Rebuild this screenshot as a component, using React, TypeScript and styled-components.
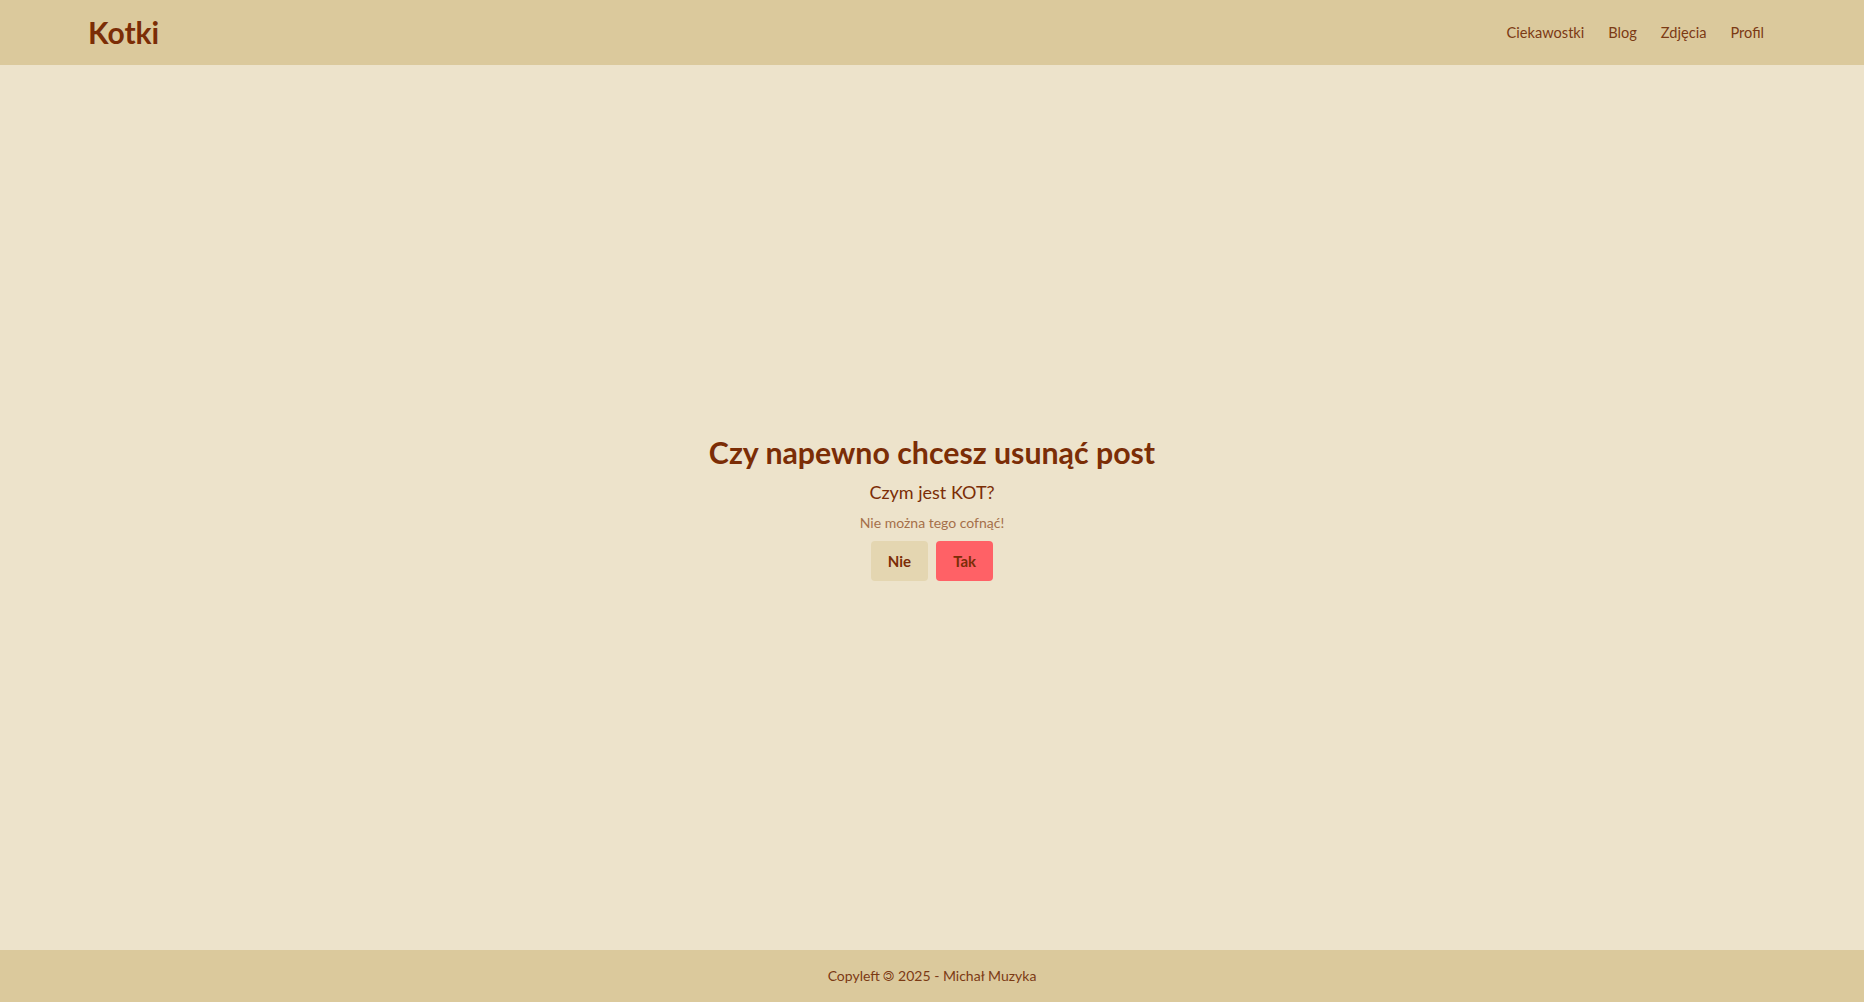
import React from "react";
import styled, { createGlobalStyle } from "styled-components";

const Global = createGlobalStyle`
  html, body { margin: 0; padding: 0; height: 100%; }
  body { background: #ede3cb; color: #7b2d06; font-family: "Lato", "Noto Sans", sans-serif; }
  #root { min-height: 100vh; display: flex; flex-direction: column; }
`;

const Header = styled.header`
  height: 65px;
  background: #dbc99c;
  display: flex;
  align-items: center;
  justify-content: space-between;
  padding: 0 88px;
  box-sizing: border-box;
`;

const Logo = styled.a`
  font-family: "Lato", sans-serif;
  font-weight: 700;
  font-size: 30px;
  color: #7b2d06;
  text-decoration: none;
  margin-top: -1px;
`;

const Nav = styled.nav`
  display: flex;
`;

const NavLink = styled.a`
  font-family: "Lato", sans-serif;
  font-size: 14.6px;
  color: #7b3a14;
  padding: 0 12px;
  text-decoration: none;
  margin-top: -1px;
`;

const Main = styled.main`
  flex: 1;
  display: flex;
  flex-direction: column;
  align-items: center;
  justify-content: center;
`;

const Title = styled.h1`
  font-family: "Lato", sans-serif;
  font-weight: 700;
  font-size: 30.3px;
  line-height: 36px;
  margin: 0;
  color: #7b2d06;
`;

const Subtitle = styled.h2`
  font-family: "Lato", sans-serif;
  font-weight: 400;
  font-size: 18px;
  line-height: 24px;
  margin: 10px 0 0;
  color: #7b2d06;
`;

const Note = styled.p`
  font-family: "Lato", sans-serif;
  font-size: 14px;
  line-height: 20px;
  margin: 9px 0 0;
  color: #a5704a;
`;

const Buttons = styled.div`
  display: flex;
  gap: 8px;
  margin-top: 8px;
`;

const Button = styled.button<{ $danger?: boolean }>`
  font-family: "Lato", sans-serif;
  font-weight: 700;
  font-size: 15px;
  height: 40px;
  padding: 0 17px;
  border: none;
  border-radius: 4px;
  background: ${(p) => (p.$danger ? "#ff6166" : "#e4d6b1")};
  color: #7b2d06;
  cursor: pointer;
`;

const Footer = styled.footer`
  height: 52px;
  background: #dbc99c;
  display: flex;
  align-items: center;
  justify-content: center;
  font-family: "Lato", sans-serif;
  font-size: 14px;
  color: #7b3a14;
`;

export default function App() {
  return (
    <>
      <Global />
      <Header>
        <Logo href="#">Kotki</Logo>
        <Nav>
          <NavLink href="#">Ciekawostki</NavLink>
          <NavLink href="#">Blog</NavLink>
          <NavLink href="#">Zdjęcia</NavLink>
          <NavLink href="#">Profil</NavLink>
        </Nav>
      </Header>
      <Main>
        <Title>Czy napewno chcesz usunąć post</Title>
        <Subtitle>Czym jest KOT?</Subtitle>
        <Note>Nie można tego cofnąć!</Note>
        <Buttons>
          <Button>Nie</Button>
          <Button $danger>Tak</Button>
        </Buttons>
      </Main>
      <Footer>Copyleft 🄯 2025 - Michał Muzyka</Footer>
    </>
  );
}
